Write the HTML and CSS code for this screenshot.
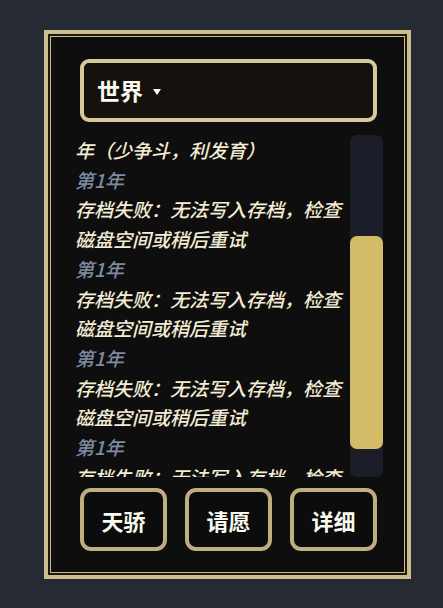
FILE: index.html
```html
<!DOCTYPE html>
<html lang="zh-CN">
<head>
<meta charset="utf-8">
<title>世界</title>
<link rel="stylesheet" href="styles.css">
</head>
<body>
<div class="frame">
  <div class="frame-inner">
    <div class="content">
      <div class="selector">
        <span class="selector-label">世界</span>
        <svg class="caret" width="8" height="6" viewBox="0 0 8 6"><polygon points="0,0 8,0 4,6" fill="#fafaf0"/></svg>
      </div>
      <div class="log-row">
        <div class="log">
          <div class="line">年（少争斗，利发育）</div>
          <div class="line year">第1年</div>
          <div class="line">存档失败：无法写入存档，检查磁盘空间或稍后重试</div>
          <div class="line year">第1年</div>
          <div class="line">存档失败：无法写入存档，检查磁盘空间或稍后重试</div>
          <div class="line year">第1年</div>
          <div class="line">存档失败：无法写入存档，检查磁盘空间或稍后重试</div>
          <div class="line year">第1年</div>
          <div class="line">存档失败：无法写入存档，检查磁盘空间或稍后重试</div>
        </div>
        <div class="scroll-track">
          <div class="scroll-thumb"></div>
        </div>
      </div>
      <div class="buttons">
        <div class="btn">天骄</div>
        <div class="btn">请愿</div>
        <div class="btn">详细</div>
      </div>
    </div>
  </div>
</div>
</body>
</html>
```

FILE: styles.css
```css
html, body {
  margin: 0;
  padding: 0;
  background: #262a33;
}
body {
  width: 443px;
  height: 608px;
  overflow: hidden;
  font-family: "Noto Sans CJK SC", "Noto Sans", sans-serif;
}
.frame {
  margin: 30px 0 0 44px;
  width: 367px;
  height: 549px;
  box-sizing: border-box;
  border: 4px solid #cdbd8f;
  background: #1c1810;
  padding: 2px;
}
.frame-inner {
  height: 100%;
  box-sizing: border-box;
  border: 1px solid #c9b98b;
  background: #0e0e0e;
}
.content {
  padding: 22px 21px 21px 24px;
  display: flex;
  flex-direction: column;
}
.selector {
  margin-left: 5px;
  width: 297px;
  height: 63px;
  box-sizing: border-box;
  border: 4px solid #d8c99b;
  border-radius: 9px;
  background: #15120d;
  display: flex;
  align-items: center;
  padding-left: 13px;
  gap: 10px;
}
.selector-label {
  color: #fafaf0;
  font-size: 23px;
  font-weight: 700;
  line-height: 1;
}
.caret {
  display: block;
  margin-top: 2px;
}
.log-row {
  margin-top: 13px;
  height: 342px;
  display: flex;
}
.log {
  width: 275px;
  height: 342px;
  overflow: hidden;
  font-size: 19px;
  line-height: 29.7px;
  font-style: italic;
  font-weight: 500;
  color: #f4ecd4;
}
.line {
  white-space: normal;
}
.year {
  color: #7d8ba3;
}
.scroll-track {
  width: 33px;
  height: 342px;
  background: #1b1e28;
  border-radius: 7px;
  position: relative;
}
.scroll-thumb {
  position: absolute;
  left: 0;
  right: 0;
  top: 101px;
  height: 213px;
  background: #d3bb67;
  border-radius: 7px;
}
.buttons {
  margin-top: 11px;
  margin-left: 5px;
  display: flex;
  gap: 18px;
}
.btn {
  width: 87px;
  height: 63px;
  box-sizing: border-box;
  border: 4px solid #bfae80;
  border-radius: 11px;
  background: #0c0c0c;
  color: #fafaf0;
  font-size: 22px;
  font-weight: 700;
  display: flex;
  align-items: center;
  justify-content: center;
}
```
